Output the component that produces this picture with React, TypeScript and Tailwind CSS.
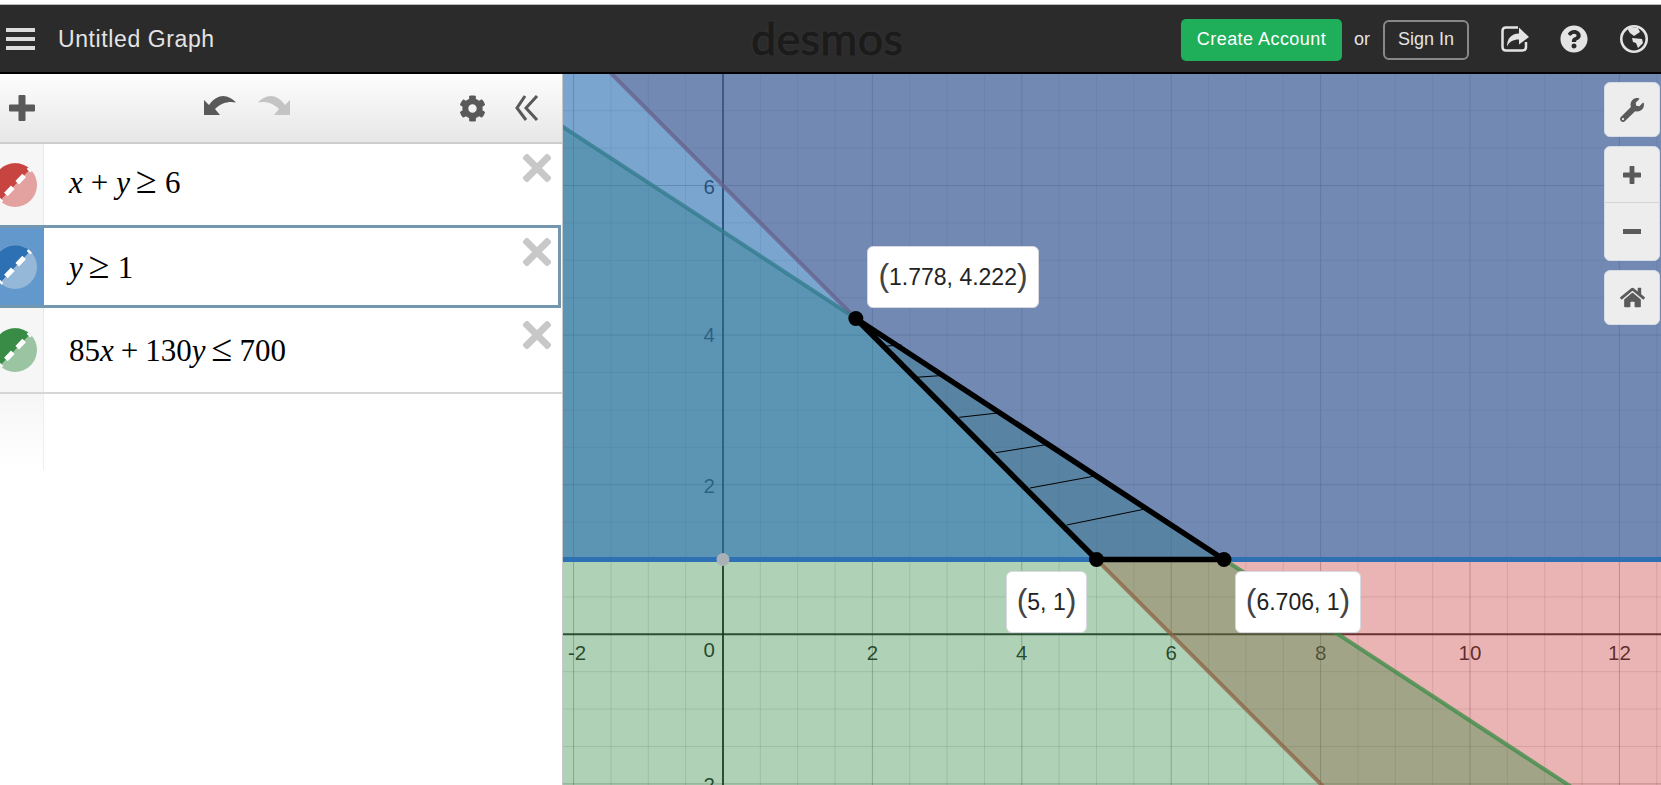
import React from 'react'
import { FaCog, FaWrench, FaHome, FaQuestionCircle } from 'react-icons/fa'

const sx = (x: number) => 723 + 74.7 * x
const sy = (y: number) => 634.3 - 74.8 * y
const pts = (list: number[][]) => list.map(([x, y]) => `${sx(x)},${sy(y)}`).join(' ')

const range = (from: number, to: number) => {
  const out: number[] = []
  for (let v = from; v <= to; v += 0.5) out.push(v)
  return out
}

const GraphPlot = () => {
  const xs = range(-3, 13)
  const ys = range(-3, 8)
  const op = (v: number) => (v === 0 ? 0.85 : v % 2 === 0 ? 0.28 : 0.12)
  const w = (v: number) => (v === 0 ? 2 : 1)
  return (
    <svg viewBox="563 74 1098 711" className="block w-full h-full" style={{ fontFamily: '"Liberation Sans", Arial, sans-serif' }}>
      <rect x="563" y="74" width="1098" height="711" fill="#fff" />
      {xs.map((v) => (
        <line key={`x${v}`} x1={sx(v)} x2={sx(v)} y1="74" y2="785" stroke="#000" strokeOpacity={op(v)} strokeWidth={w(v)} />
      ))}
      {ys.map((v) => (
        <line key={`y${v}`} y1={sy(v)} y2={sy(v)} x1="563" x2="1661" stroke="#000" strokeOpacity={op(v)} strokeWidth={w(v)} />
      ))}
      <g fontSize="20.5" fill="#000" fillOpacity="0.9">
        {[2, 4, 6, 8, 10, 12].map((v) => (
          <text key={v} x={sx(v)} y="660" textAnchor="middle">{v}</text>
        ))}
        <text x="577" y="660" textAnchor="middle">-2</text>
        <text x="715" y="657" textAnchor="end">0</text>
        <text x="715" y="342" textAnchor="end">4</text>
        <text x="715" y="194" textAnchor="end">6</text>
        <text x="715" y="493" textAnchor="end">2</text>
        <text x="715" y="792" textAnchor="end">-2</text>
      </g>

      {/* red: x + y >= 6 */}
      <polygon points={pts([[-4, 10], [20, 10], [20, -14]])} fill="#c74440" fillOpacity="0.4" />
      <line x1={sx(-4)} y1={sy(10)} x2={sx(20)} y2={sy(-14)} stroke="#c74440" strokeOpacity="0.75" strokeWidth="4" />
      {/* green: 85x + 130y <= 700 */}
      <polygon points={pts([[-4, 8], [20, -7.692], [20, -20], [-4, -20]])} fill="#388c46" fillOpacity="0.4" />
      <line x1={sx(-4)} y1={sy(8)} x2={sx(20)} y2={sy(-7.692)} stroke="#388c46" strokeOpacity="0.75" strokeWidth="4" />
      {/* blue: y >= 1 */}
      <polygon points={pts([[-4, 1], [20, 1], [20, 10], [-4, 10]])} fill="#2d70b3" fillOpacity="0.63" />
      <line x1="563" y1={sy(1)} x2="1661" y2={sy(1)} stroke="#2d70b3" strokeWidth="5" />

      <circle cx={sx(0)} cy={sy(1)} r="6.5" fill="#a9b0b8" />

      {/* pen marks on the feasible region */}
      <g stroke="#000" strokeWidth="1">
        <line x1="886.7" y1="346" x2="901.7" y2="345" />
        <line x1="916" y1="377.3" x2="945" y2="375.3" />
        <line x1="959.3" y1="417.3" x2="1000.7" y2="412.7" />
        <line x1="995.7" y1="452.7" x2="1048.3" y2="444.3" />
        <line x1="1030" y1="488" x2="1096.7" y2="475.7" />
        <line x1="1066.7" y1="525" x2="1146.7" y2="508.7" />
      </g>
      <polygon points={pts([[1.778, 4.222], [5, 1], [6.706, 1]])} fill="none" stroke="#000" strokeWidth="5.5" strokeLinejoin="round" />
      <circle cx={sx(1.778)} cy={sy(4.222)} r="7.5" fill="#000" />
      <circle cx={sx(5)} cy={sy(1)} r="7.5" fill="#000" />
      <circle cx={sx(6.706)} cy={sy(1)} r="7.5" fill="#000" />
    </svg>
  )
}

const PointLabel = ({ text, className }: { text: string; className: string }) => (
  <div className={`absolute h-[62px] flex items-center justify-center bg-white rounded-[6px] border border-[#d8d8e0] text-[#222] text-[23px] ${className}`}>
    <span className="text-[32px] text-[#444] leading-none mt-[-4px]">(</span>
    <span>{text}</span>
    <span className="text-[32px] text-[#444] leading-none mt-[-4px]">)</span>
  </div>
)

const ColorDot = ({ dark, light }: { dark: string; light: string }) => (
  <svg width="44" height="44" viewBox="0 0 44 44" className="shrink-0 ml-[-7px]">
    <circle cx="22" cy="22" r="22" fill={light} />
    <path d="M6.8 37.9 A22 22 0 0 1 37.2 6.1 Z" fill={dark} />
    <line x1="6.8" y1="37.9" x2="37.2" y2="6.1" stroke="#fff" strokeWidth="5" strokeDasharray="10 6.4" strokeDashoffset="7.6" />
  </svg>
)

const PlusIcon = ({ className }: { className: string }) => (
  <svg viewBox="0 0 26 26" className={className} fill="currentColor">
    <path d="M9.5 1 Q9.5 0 10.5 0 H15.5 Q16.5 0 16.5 1 V9.5 H25 Q26 9.5 26 10.5 V15.5 Q26 16.5 25 16.5 H16.5 V25 Q16.5 26 15.5 26 H10.5 Q9.5 26 9.5 25 V16.5 H1 Q0 16.5 0 15.5 V10.5 Q0 9.5 1 9.5 H9.5 Z" />
  </svg>
)

const UndoIcon = ({ className }: { className: string }) => (
  <svg viewBox="0 0 32 19" className={className} fill="currentColor">
    <path d="M0 4 L5 9 C9 3 15 0 19 0 C24 0 29 3 32 6.5 C26 5 18 6 11 13 L16 19 L0 19 Z" />
  </svg>
)

const CollapseIcon = () => (
  <svg viewBox="0 0 24 26" className="ml-[29px] w-[24px] h-[26px] text-[#595959]" fill="none" stroke="currentColor" strokeWidth="3">
    <path d="M10 1 L2 13 L11 25" />
    <path d="M22 1 L11 13 L22 25" />
  </svg>
)

const CloseIcon = ({ className }: { className: string }) => (
  <svg viewBox="0 0 28 28" className={`absolute w-[28px] h-[28px] text-[#c8c8c8] ${className}`} stroke="currentColor" strokeWidth="7">
    <path d="M1.5 1.5 L26.5 26.5 M26.5 1.5 L1.5 26.5" />
  </svg>
)

const ShareIcon = () => (
  <svg viewBox="0 0 28 26" className="ml-[32px] w-[28px] h-[26px] text-[#e4e4e4]">
    <path d="M17 1.5 H5 Q1.5 1.5 1.5 5 V21 Q1.5 24.5 5 24.5 H21.5 Q25 24.5 25 21 V16" fill="none" stroke="currentColor" strokeWidth="2.5" />
    <path d="M18 1.5 L28 11 L18 18.5 V13.5 C12 13.5 8 16 6 20.5 C6 13 10 7.5 18 7.5 Z" fill="currentColor" />
  </svg>
)

const GlobeIcon = () => (
  <svg viewBox="0 0 28 28" className="ml-[32px] mr-[13px] w-[28px] h-[28px] text-[#e4e4e4]" fill="currentColor">
    <circle cx="14" cy="14" r="12.7" fill="none" stroke="currentColor" strokeWidth="2.6" />
    <path d="M9 2 L18 3 L20 7 L14 11 L10 8 L8 5 Z" />
    <path d="M12 13 L22 14 L23 18 L18 23 L16 18 L13 17 Z" />
  </svg>
)

const I = ({ children }: { children: React.ReactNode }) => <i className="italic">{children}</i>
const Rel = ({ children, className }: { children: React.ReactNode; className: string }) => (
  <span className={`text-[38px] leading-none ${className}`}>{children}</span>
)

const ExpressionRow = ({
  children, dark, light, selected, rowClass, mathClass, closeClass,
}: {
  children: React.ReactNode; dark: string; light: string; selected?: boolean; rowClass: string; mathClass: string; closeClass: string
}) => (
  <div className={`flex ${rowClass}`}>
    <div className={`w-[44px] shrink-0 flex items-center overflow-hidden ${selected ? 'bg-[#6398cc] border-y-[3px] border-[#7497b0]' : 'bg-[#f6f6f6] border-r border-[#e6e6e6]'}`}>
      <ColorDot dark={dark} light={light} />
    </div>
    <div className={`relative flex-1 flex items-center pl-[25px] text-[31px] text-black ${selected ? 'border-y-[3px] border-r-[3px] border-[#7497b0] mr-[1px]' : ''}`} style={{ fontFamily: '"Liberation Serif", "Times New Roman", serif' }}>
      <div className={`whitespace-nowrap ${mathClass}`}>{children}</div>
      <CloseIcon className={closeClass} />
    </div>
  </div>
)

const App = () => {
  return (
    <div className="w-[1661px] h-[785px] overflow-hidden flex flex-col bg-white" style={{ fontFamily: '"Liberation Sans", Arial, sans-serif' }}>
      <div className="h-[4px] shrink-0 bg-white" />
      {/* top bar */}
      <header className="relative h-[70px] shrink-0 bg-[#2b2b2b] border-t border-[#bbb] border-b-2 border-b-black flex items-center text-[#e4e4e4]">
        <div className="ml-[6px] w-[29px] flex flex-col gap-[5px]">
          <div className="h-[4px] bg-[#dcdcdc]" />
          <div className="h-[4px] bg-[#dcdcdc]" />
          <div className="h-[4px] bg-[#dcdcdc]" />
        </div>
        <span className="ml-[23px] mt-[2px] text-[23px] tracking-[0.6px]">Untitled Graph</span>
        <span className="absolute left-[751px] top-[5px] text-[#1b1b1b] text-[45px] leading-[56px] tracking-[0.3px] [-webkit-text-stroke:1px_#1b1b1b]" style={{ fontFamily: 'Lato, sans-serif', textShadow: '0 0 3px rgba(255,255,255,0.12)' }}>desmos</span>
        <div className="ml-auto flex items-center">
          <button className="mt-[2px] w-[161px] h-[42px] rounded-[5px] bg-[#1fae59] text-white text-[18px] tracking-[0.45px]">Create Account</button>
          <span className="ml-[12px] mt-[2px] text-[18px]">or</span>
          <button className="ml-[13px] mt-[2px] w-[86px] h-[40px] rounded-[6px] border-2 border-[#888] text-[18px]">Sign In</button>
          <ShareIcon />
          <FaQuestionCircle className="ml-[31px] text-[#e4e4e4] text-[28px]" />
          <GlobeIcon />
        </div>
      </header>

      <div className="flex-1 flex min-h-0">
        {/* expression list */}
        <aside className="w-[563px] shrink-0 border-r border-[#c8c8c8] flex flex-col bg-white">
          <div className="h-[70px] shrink-0 flex items-center border-b-2 border-[#cdcdcd] bg-gradient-to-b from-[#fdfdfd] to-[#e7e7e7] text-[#595959]">
            <PlusIcon className="ml-[9px] w-[26px] h-[26px]" />
            <UndoIcon className="ml-[169px] w-[32px] h-[19px] mt-[-6px]" />
            <UndoIcon className="ml-[22px] w-[32px] h-[19px] mt-[-6px] -scale-x-100 text-[#c4c4c4]" />
            <FaCog className="ml-[169px] text-[27px]" />
            <CollapseIcon />
          </div>
          <ExpressionRow dark="#c74440" light="#e3a2a0" rowClass="h-[81px]" mathClass="pb-[3px]" closeClass="right-[11px] top-[10px]">
            <I>x</I><span className="mx-[8px]">+</span><I>y</I><Rel className="ml-[6px] mr-[8px]">≥</Rel>6
          </ExpressionRow>
          <ExpressionRow dark="#2d70b3" light="#95b8d9" selected rowClass="h-[83px]" mathClass="pt-[3px]" closeClass="right-[7px] top-[10px]">
            <I>y</I><Rel className="ml-[6px] mr-[8px]">≥</Rel>1
          </ExpressionRow>
          <ExpressionRow dark="#388c46" light="#9bc5a2" rowClass="h-[86px] border-b-2 border-[#d6d6d6]" mathClass="pt-[2px]" closeClass="right-[11px] top-[13px]">
            85<I>x</I><span className="mx-[7px]">+</span>130<I>y</I><Rel className="ml-[6px] mr-[7px]">≤</Rel>700
          </ExpressionRow>
          <div className="h-[76px] w-[44px] bg-gradient-to-b from-[#f6f6f6] to-white border-r border-[#eee]" />
        </aside>

        {/* graph */}
        <main className="relative flex-1 min-w-0 overflow-hidden">
          <GraphPlot />
          <PointLabel text="1.778, 4.222" className="left-[304px] top-[172px] w-[172px]" />
          <PointLabel text="5, 1" className="left-[443px] top-[497px] w-[81px]" />
          <PointLabel text="6.706, 1" className="left-[672px] top-[497px] w-[126px]" />

          <div className="absolute right-[1px] top-[8px] w-[56px] flex flex-col gap-[9px] text-[#5a5a5a]">
            <div className="h-[55px] rounded-[6px] bg-[#ededed] border border-[#d5dce8] flex items-center justify-center">
              <FaWrench className="text-[24px]" />
            </div>
            <div className="h-[115px] rounded-[6px] bg-[#ededed] border border-[#d5dce8] flex flex-col">
              <div className="h-[56px] flex items-center justify-center border-b border-[#d5d5d5]">
                <PlusIcon className="w-[18px] h-[18px]" />
              </div>
              <div className="flex-1 flex items-center justify-center">
                <div className="w-[18px] h-[5px] bg-[#5a5a5a]" />
              </div>
            </div>
            <div className="h-[55px] rounded-[6px] bg-[#ededed] border border-[#d5dce8] flex items-center justify-center">
              <FaHome className="text-[25px]" />
            </div>
          </div>
        </main>
      </div>
    </div>
  )
}

export default App
